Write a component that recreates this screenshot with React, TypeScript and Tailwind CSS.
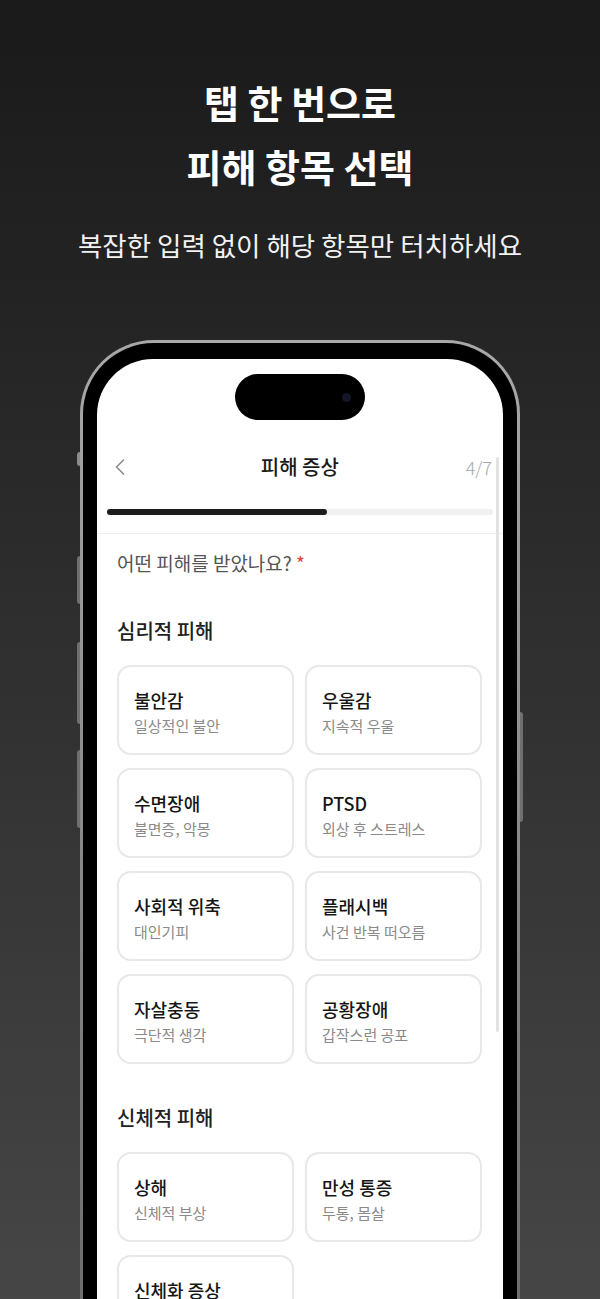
import { ChevronLeft } from "lucide-react";

const psych = [
  { t: "불안감", s: "일상적인 불안" },
  { t: "우울감", s: "지속적 우울" },
  { t: "수면장애", s: "불면증, 악몽" },
  { t: "PTSD", s: "외상 후 스트레스" },
  { t: "사회적 위축", s: "대인기피" },
  { t: "플래시백", s: "사건 반복 떠오름" },
  { t: "자살충동", s: "극단적 생각" },
  { t: "공황장애", s: "갑작스런 공포" },
];

const physical = [
  { t: "상해", s: "신체적 부상" },
  { t: "만성 통증", s: "두통, 몸살" },
  { t: "신체화 증상", s: "스트레스성 증상" },
];

function Card({ t, s }: { t: string; s: string }) {
  return (
    <div className="h-[90px] rounded-[14px] border-2 border-[#e8e8e8] bg-white pl-[15px] pt-[21px]">
      <div className="text-[18px] leading-[24px] font-medium text-[#161616]">{t}</div>
      <div className="mt-[3px] text-[15px] leading-[22px] text-[#8a8a8a]">{s}</div>
    </div>
  );
}

function Section({ title, items }: { title: string; items: { t: string; s: string }[] }) {
  return (
    <div className="mt-[40px]">
      <div className="text-[20px] leading-[28px] font-medium text-[#222]">{title}</div>
      <div className="mt-[20px] grid grid-cols-2 gap-x-[11px] gap-y-[13px]">
        {items.map((it) => (
          <Card key={it.t} {...it} />
        ))}
      </div>
    </div>
  );
}

export default function App() {
  return (
    <div
      className="h-[1299px] w-[600px] overflow-hidden bg-gradient-to-b from-[#1a1a1a] to-[#464646] text-center"
      style={{ fontFamily: '"Noto Sans CJK KR", "Noto Sans", sans-serif' }}
    >
      <div className="pt-[70px]">
        <h1 className="text-[38px] leading-[64px] font-bold text-white">
          탭 한 번으로
          <br />
          피해 항목 선택
        </h1>
        <p className="mt-[27px] text-[26.5px] leading-[40px] text-[#f2f2f2]">복잡한 입력 없이 해당 항목만 터치하세요</p>
      </div>

      {/* phone */}
      <div className="relative mx-auto mt-[75px] w-[440px]">
        {/* side buttons */}
        <div className="absolute left-[-3px] top-[112px] h-[14px] w-[3px] rounded-l bg-[#8c8c8c]" />
        <div className="absolute left-[-3px] top-[216px] h-[48px] w-[3px] rounded-l bg-[#6f6f6f]" />
        <div className="absolute left-[-3px] top-[302px] h-[82px] w-[3px] rounded-l bg-[#6f6f6f]" />
        <div className="absolute left-[-3px] top-[410px] h-[78px] w-[3px] rounded-l bg-[#6f6f6f]" />
        <div className="absolute right-[-3px] top-[372px] h-[110px] w-[3px] rounded-r bg-[#6f6f6f]" />

        <div className="rounded-[74px] bg-gradient-to-b from-[#a8a8a8] to-[#6a6a6a] p-[3px]">
          <div className="rounded-[71px] bg-black px-[14px] pt-[16px] pb-[14px]">
            <div className="relative h-[1000px] overflow-hidden rounded-[56px] bg-white text-left">
              {/* dynamic island */}
              <div className="mx-auto mt-[15px] flex h-[46px] w-[130px] items-center justify-end rounded-full bg-black pr-[14px]">
                <div className="h-[9px] w-[9px] rounded-full bg-[#14142a]" />
              </div>

              {/* header */}
              <div className="mt-[22px] flex h-[50px] items-center justify-between pl-[9px] pr-[11px]">
                <ChevronLeft className="h-[28px] w-[28px] text-[#8a8a8a]" strokeWidth={1.3} />
                <div className="text-[20px] font-medium text-[#1a1a1a]">피해 증상</div>
                <div className="text-[18px] font-light text-[#a8a8a8]">4/7</div>
              </div>

              {/* progress */}
              <div className="mx-[10px] mt-[17px] h-[6px] rounded-full bg-[#f0f0f0]">
                <div className="h-full w-[57%] rounded-full bg-[#1c1c1c]" />
              </div>
              <div className="mt-[18px] border-t border-[#efefef]" />

              {/* scrollbar */}
              <div className="absolute right-[4px] top-[98px] h-[575px] w-[3px] rounded-full bg-[#e2e2e2]" />

              <div className="pl-[20px] pr-[21px]">
                <div className="mt-[15px] text-[19px] leading-[28px] text-[#555]">
                  어떤 피해를 받았나요? <span className="text-[#e0453a]">*</span>
                </div>
                <Section title="심리적 피해" items={psych} />
                <Section title="신체적 피해" items={physical} />
              </div>
            </div>
          </div>
        </div>
      </div>
    </div>
  );
}
